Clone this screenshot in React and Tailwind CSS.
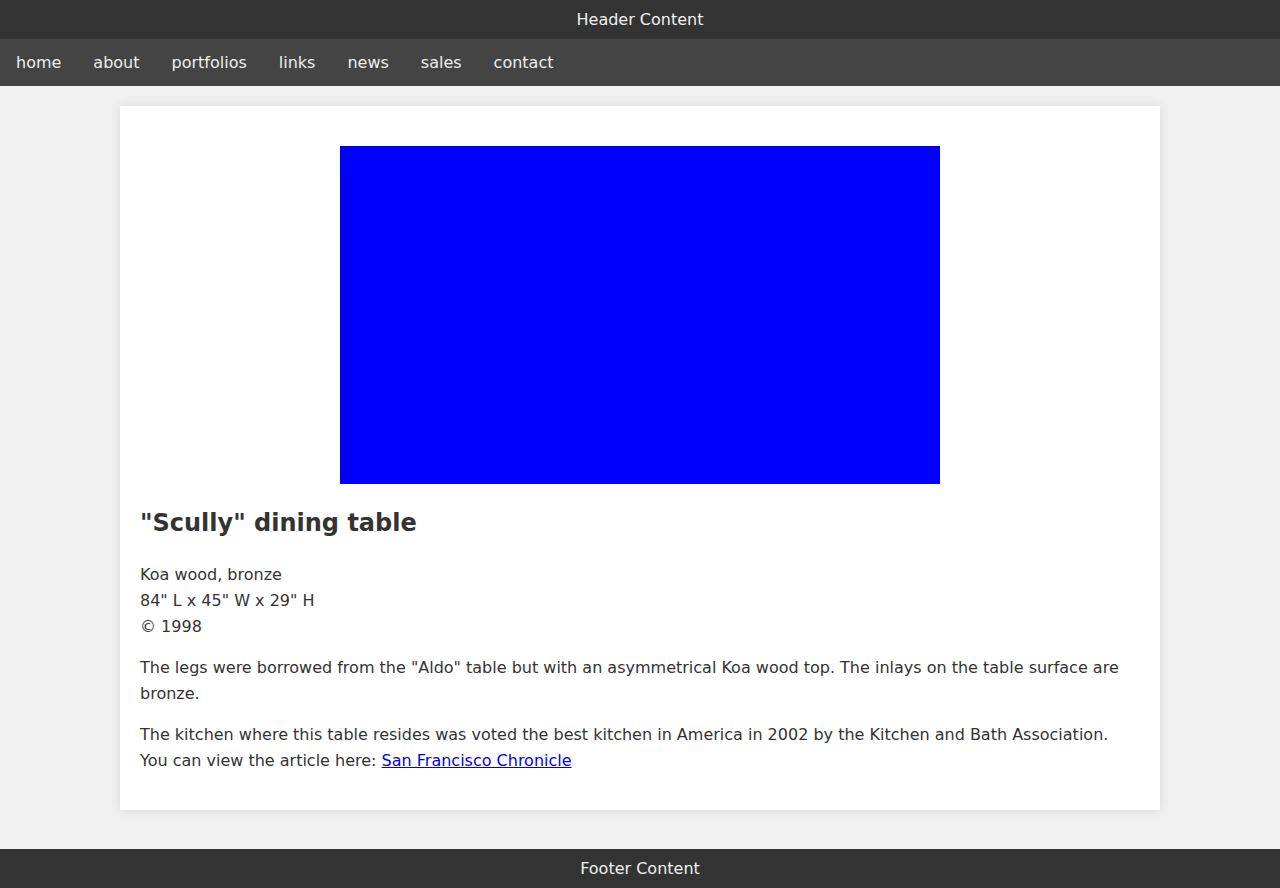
export default function App() {
  const nav = ["home", "about", "portfolios", "links", "news", "sales", "contact"];
  return (
    <div className="flex min-h-screen flex-col bg-[#f0f0f0] text-[16px] leading-[1.6] text-[#333]" style={{ fontFamily: '"DejaVu Sans", sans-serif' }}>
      <header className="flex h-[39px] items-center justify-center bg-[#333] text-[#f0f0f0]">
        Header Content
      </header>
      <nav className="flex h-[47px] items-center bg-[#444]">
        {nav.map((n) => (
          <a key={n} href="#" className="px-4 text-[#eee] no-underline">
            {n}
          </a>
        ))}
      </nav>
      <main className="flex-1 p-5">
        <div className="mx-auto w-[1040px] bg-white p-5 shadow-[0_0_10px_rgba(0,0,0,0.1)]">
          <div className="mx-auto mt-5 h-[338px] w-[600px] bg-[#0000ff]"></div>
          <h2 className="mt-5 mb-[20px] text-[24px] font-bold leading-[38.4px]">"Scully" dining table</h2>
          <p className="mb-4">
            Koa wood, bronze
            <br />
            84" L x 45" W x 29" H
            <br />© 1998
          </p>
          <p className="mb-4">
            The legs were borrowed from the "Aldo" table but with an asymmetrical Koa wood top. The inlays on the table surface are bronze.
          </p>
          <p className="mb-4">
            The kitchen where this table resides was voted the best kitchen in America in 2002 by the Kitchen and Bath Association. You can view the article here:{" "}
            <a href="#" className="text-[#0000ee] underline">San Francisco Chronicle</a>
          </p>
        </div>
      </main>
      <footer className="flex h-[39px] items-center justify-center bg-[#333] text-[#f0f0f0]">
        Footer Content
      </footer>
    </div>
  );
}
